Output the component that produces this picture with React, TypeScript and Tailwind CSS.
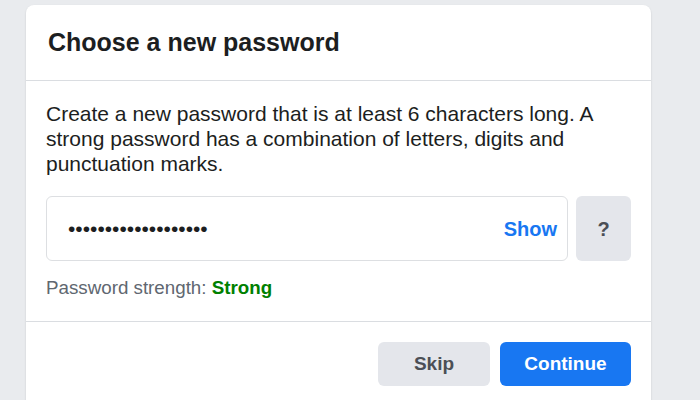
export default function App() {
  return (
    <div
      className="h-[400px] w-[700px] overflow-hidden bg-[#e9ebee] pt-[5px] pl-[26px]"
      style={{ fontFamily: '"Liberation Sans", Arial, sans-serif' }}
    >
      <div className="h-[420px] w-[625px] rounded-t-lg bg-white shadow-[0_1px_2px_rgba(0,0,0,0.15)]">
        <div className="flex h-[76px] items-center border-b border-[#dadde1] px-[22px]">
          <h2 className="text-[25px] font-bold text-[#1c1e21]">Choose a new password</h2>
        </div>
        <div className="px-5 pt-5 pb-[19px]">
          <p className="text-[21px] leading-[25px] text-[#1c1e21]">
            Create a new password that is at least 6 characters long. A strong password has a
            combination of letters, digits and punctuation marks.
          </p>
          <div className="mt-5 flex gap-2">
            <div className="flex h-[65px] flex-1 items-center rounded-md border border-[#dddfe2] pr-[10px] pl-[21px]">
              <span className="flex-1 text-[21px] text-[#1c1e21]">•••••••••••••••••••</span>
              <button className="text-[20px] font-bold text-[#1877f2]">Show</button>
            </div>
            <button className="h-[65px] w-[55px] rounded-md bg-[#e4e6eb] text-[20px] font-bold text-[#4b4f56]">
              ?
            </button>
          </div>
          <div className="mt-[13px] text-[18.75px] text-[#606770]">
            Password strength: <span className="font-bold text-[#008000]">Strong</span>
          </div>
        </div>
        <div className="flex justify-end gap-[10px] border-t border-[#dadde1] px-5 pt-5 pb-5">
          <button className="h-[44px] w-[112px] rounded-md bg-[#e4e6eb] text-[19px] font-bold text-[#4b4f56]">
            Skip
          </button>
          <button className="h-[44px] w-[131px] rounded-md bg-[#1877f2] text-[19px] font-bold text-white">
            Continue
          </button>
        </div>
      </div>
    </div>
  );
}
